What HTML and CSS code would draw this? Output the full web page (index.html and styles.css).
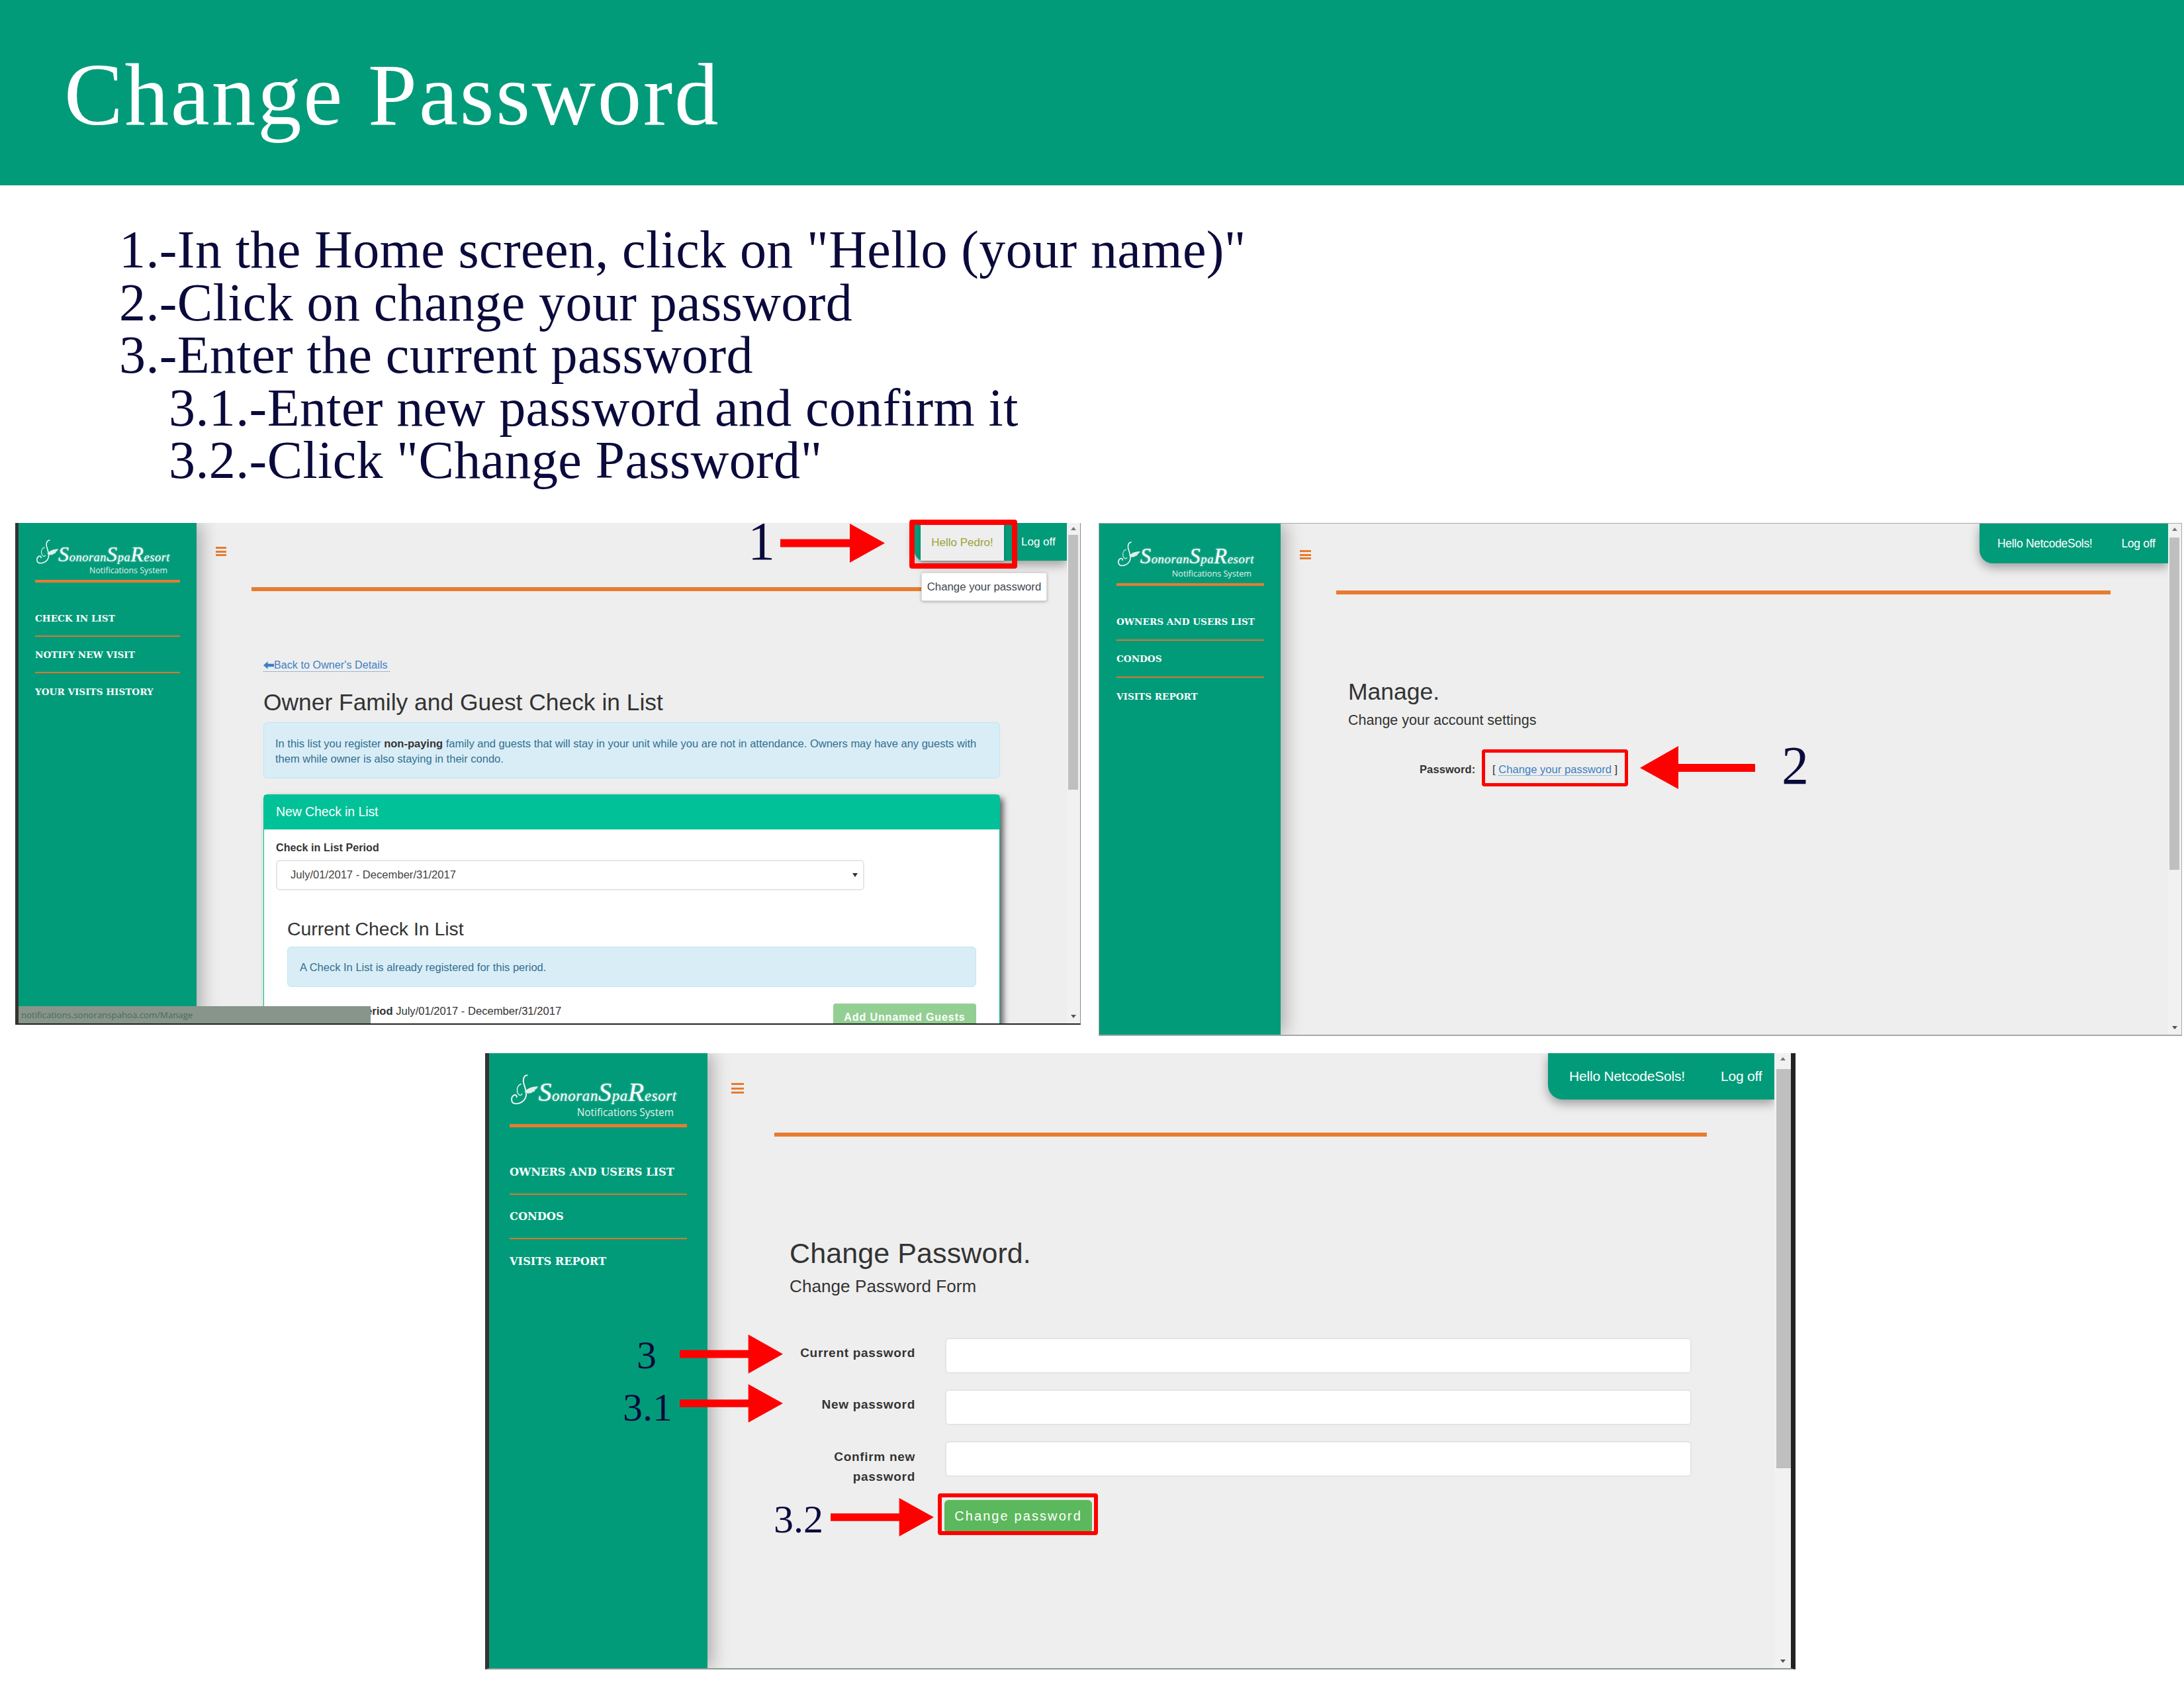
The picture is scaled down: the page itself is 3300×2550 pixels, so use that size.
FILE: index.html
```html
<!DOCTYPE html>
<html lang="en">
<head>
<meta charset="utf-8">
<title>Change Password</title>
<link rel="stylesheet" href="styles.css">
</head>
<body>
<svg class="defs" width="0" height="0" aria-hidden="true">
  <symbol id="flourish" viewBox="0 0 34 38">
    <path d="M21 1C16 1 15 6 16 11C18 18 21 24 18 30C15 36 7 38 3 36C0 34 0 28 4 26C6 25 8 27 7 29" fill="none" stroke="#f2f8f6" stroke-width="1.600"/>
    <path d="M13 12C9 13 7 17 8 22C9 26 13 28 14 24" fill="none" stroke="#f2f8f6" stroke-width="1.100"/>
    <path d="M17 22C21 17 27 15 34 15C33 18 31 19 30 19C31 21 29 22 27 22C26 24 21 25 17 22Z" fill="#dfeee9"/>
  </symbol>
  <symbol id="arrow-right" viewBox="0 0 158 60" preserveAspectRatio="none">
    <polygon points="0,24 105,24 105,0 158,30 105,60 105,36 0,36" fill="#fe0000"/>
  </symbol>
  <symbol id="arrow-left" viewBox="0 0 174 65" preserveAspectRatio="none">
    <polygon points="174,27 58,27 58,0 0,33 58,65 58,39 174,39" fill="#fe0000"/>
  </symbol>
</svg>

<header class="banner"><h1>Change Password</h1></header>

<ol class="steps">
  <li>1.-In the Home screen, click on "Hello (your name)"</li>
  <li>2.-Click on change your password</li>
  <li>3.-Enter the current password</li>
  <li class="sub-step">3.1.-Enter new password and confirm it</li>
  <li class="sub-step">3.2.-Click "Change Password"</li>
</ol>

<main class="canvas">

  <!-- Window 1 -->
  <section class="win win-a">
    <aside class="side">
      <div class="logo">
        <svg class="flourish"><use href="#flourish"/></svg>
        <div class="logo-text">
          <div class="logo-name"><b>S</b>onoran<b>S</b>pa<b>R</b>esort</div>
          <div class="logo-sub">Notifications System</div>
        </div>
      </div>
      <nav class="nav">
        <a>CHECK IN LIST</a>
        <a>NOTIFY NEW VISIT</a>
        <a>YOUR VISITS HISTORY</a>
      </nav>
    </aside>
    <div class="main">
      <div class="burger"></div>
      <div class="rule"></div>
      <div class="content">
        <a class="back"><svg class="back-icon" viewBox="0 0 17 12"><polygon points="0,6 7,0 7,3.500 17,3.500 17,8.500 7,8.500 7,12" fill="#3d7fc4"/></svg>Back to Owner's Details</a>
        <h2 class="title-a">Owner Family and Guest Check in List</h2>
        <div class="alert alert-a">In this list you register <b>non-paying</b> family and guests that will stay in your unit while you are not in attendance. Owners may have any guests with them while owner is also staying in their condo.</div>
        <div class="panel">
          <div class="panel-head">New Check in List</div>
          <div class="panel-body">
            <div class="field-label">Check in List Period</div>
            <div class="select">July/01/2017 - December/31/2017<span class="caret"></span></div>
            <div class="inner">
              <h3 class="title-b">Current Check In List</h3>
              <div class="alert alert-b">A Check In List is already registered for this period.</div>
              <div class="period-row">
                <span class="period"><b>Check in List Period</b> July/01/2017 - December/31/2017</span>
                <span class="add-btn">Add Unnamed Guests</span>
              </div>
            </div>
          </div>
        </div>
      </div>
      <div class="topnav">
        <span class="hello">Hello Pedro!</span>
        <span class="logoff">Log off</span>
      </div>
      <div class="dropdown">Change your password</div>
    </div>
    <div class="scroll"><i class="up"></i><i class="thumb"></i><i class="down"></i></div>
    <div class="status">notifications.sonoranspahoa.com/Manage</div>
  </section>

  <!-- Window 2 -->
  <section class="win win-b">
    <aside class="side">
      <div class="logo">
        <svg class="flourish"><use href="#flourish"/></svg>
        <div class="logo-text">
          <div class="logo-name"><b>S</b>onoran<b>S</b>pa<b>R</b>esort</div>
          <div class="logo-sub">Notifications System</div>
        </div>
      </div>
      <nav class="nav">
        <a>OWNERS AND USERS LIST</a>
        <a>CONDOS</a>
        <a>VISITS REPORT</a>
      </nav>
    </aside>
    <div class="main">
      <div class="burger"></div>
      <div class="rule"></div>
      <div class="content">
        <h2 class="page-title">Manage.</h2>
        <p class="page-sub">Change your account settings</p>
        <div class="pw-row">
          <b class="pw-label">Password:</b>
          <span class="pw-link">[ <a>Change your password</a> ]</span>
        </div>
      </div>
      <div class="topnav">
        <span class="hello">Hello NetcodeSols!</span>
        <span class="logoff">Log off</span>
      </div>
    </div>
    <div class="scroll"><i class="up"></i><i class="thumb"></i><i class="down"></i></div>
  </section>

  <!-- Window 3 -->
  <section class="win win-c">
    <aside class="side">
      <div class="logo">
        <svg class="flourish"><use href="#flourish"/></svg>
        <div class="logo-text">
          <div class="logo-name"><b>S</b>onoran<b>S</b>pa<b>R</b>esort</div>
          <div class="logo-sub">Notifications System</div>
        </div>
      </div>
      <nav class="nav">
        <a>OWNERS AND USERS LIST</a>
        <a>CONDOS</a>
        <a>VISITS REPORT</a>
      </nav>
    </aside>
    <div class="main">
      <div class="burger"></div>
      <div class="rule"></div>
      <div class="content">
        <h2 class="page-title">Change Password.</h2>
        <p class="page-sub">Change Password Form</p>
        <form class="form">
          <div class="form-row"><label class="form-label">Current password</label><div class="input"></div></div>
          <div class="form-row"><label class="form-label">New password</label><div class="input"></div></div>
          <div class="form-row"><label class="form-label">Confirm new password</label><div class="input"></div></div>
          <div class="form-row"><span class="form-label"></span><span class="submit">Change password</span></div>
        </form>
      </div>
      <div class="topnav">
        <span class="hello">Hello NetcodeSols!</span>
        <span class="logoff">Log off</span>
      </div>
    </div>
    <div class="scroll"><i class="up"></i><i class="thumb"></i><i class="down"></i></div>
  </section>

  <!-- Annotations over the screenshots -->
  <div class="mark mark-1"></div>
  <div class="mark mark-2"></div>
  <div class="mark mark-3"></div>

  <span class="num num-1">1</span>
  <span class="num num-2">2</span>
  <span class="num num-3">3</span>
  <span class="num num-31">3.1</span>
  <span class="num num-32">3.2</span>

  <svg class="arrow arrow-1"><use href="#arrow-right"/></svg>
  <svg class="arrow arrow-2"><use href="#arrow-left"/></svg>
  <svg class="arrow arrow-3"><use href="#arrow-right"/></svg>
  <svg class="arrow arrow-31"><use href="#arrow-right"/></svg>
  <svg class="arrow arrow-32"><use href="#arrow-right"/></svg>
</main>
</body>
</html>
```
FILE: styles.css
```css
* { box-sizing: border-box; }
html, body { margin: 0; padding: 0; background: #fff; }
body {
  width: 3300px;
  height: 2550px;
  overflow: hidden;
  font-family: "Liberation Sans", Arial, sans-serif;
  color: #333;
}
.defs { position: absolute; }

/* Banner and steps */
.banner {
  height: 280px;
  background: #029b7a;
  padding: 68px 0 0 97px;
}
.banner h1 {
  margin: 0;
  font: 400 133px/150px "Liberation Serif", serif;
  letter-spacing: 2.800px;
  color: #fff;
}
.steps {
  list-style: none;
  margin: 0;
  padding: 58px 0 0 180px;
  height: 500px;
  font: 400 80px/79.500px "Liberation Serif", serif;
  letter-spacing: .400px;
  color: #0b0a3c;
}
.steps li { white-space: nowrap; }
.sub-step { padding-left: 75px; }

/* Canvas of screenshots */
.canvas { position: relative; width: 3300px; height: 1770px; }
.win {
  position: absolute;
  display: flex;
  overflow: hidden;
  background: #eee;
}
.win-a { left: 23px; top: 10px; width: 1610px; height: 758px; border-left: 5px solid #333; border-bottom: 2px solid #222; border-right: 1px solid #7f9488; }
.win-b { left: 1660px; top: 10px; width: 1637px; height: 775px; border: 1px solid #a8a8a8; border-bottom-width: 2px; }
.win-c { left: 733px; top: 811px; width: 1980px; height: 931px; border-left: 6px solid #333; border-right: 7px solid #222; border-bottom: 2px solid #8a9a90; }

/* Sidebar */
.side {
  flex: none;
  position: relative;
  z-index: 1;
  background: #029b7a;
  box-shadow: 6px 0 26px rgba(0, 0, 0, .3);
}
.win-a .side { width: 269px; padding: 25px 25px 0; }
.win-b .side { width: 274px; padding: 27px 25px 0 26px; }
.win-c .side { width: 330px; padding: 32px 31px 0; }

.logo {
  display: flex;
  align-items: flex-start;
  padding-left: .200em;
  border-bottom: 4px solid #e87b30;
  color: #fff;
}
.win-a .logo { font-size: 10px; height: 65px; }
.win-b .logo { font-size: 10.200px; height: 67px; }
.win-c .logo { font-size: 12.400px; height: 80px; border-bottom-width: 5px; }
.flourish { flex: none; width: 3.300em; height: 3.700em; }
.logo-text { flex: none; width: 16.500em; padding-top: 1.400em; }
.logo-name {
  font: italic 400 1.840em/1.200em "Liberation Serif", serif;
  white-space: nowrap;
  text-shadow: 0 0 3px rgba(255, 255, 255, .6);
  letter-spacing: .030em;
}
.logo-name b { font-size: 1.750em; font-weight: 400; line-height: .500em; }
.logo-sub {
  font: 400 1.240em/1.200em "Open Sans", sans-serif;
  text-align: right;
  color: #e3f1ec;
  margin-top: .160em;
  white-space: nowrap;
}

.nav a {
  display: flex;
  align-items: center;
  color: #fff;
  font-family: "DejaVu Serif", serif;
  font-weight: 700;
  white-space: nowrap;
  border-bottom: 2px solid #d8772f;
}
.nav a:last-child { border-bottom: 0; }
.win-a .nav { margin-top: 27px; }
.win-a .nav a { height: 55px; font-size: 13.600px; }
.win-b .nav { margin-top: 27px; }
.win-b .nav a { height: 56px; font-size: 13.600px; }
.win-c .nav { margin-top: 35px; }
.win-c .nav a { height: 67px; font-size: 16.200px; }

/* Main */
.main { position: relative; flex: 1; min-width: 0; overflow: hidden; background: #eee; }
.burger {
  height: 14px;
  border-top: 3px solid #e87b30;
  border-bottom: 3px solid #e87b30;
  background: linear-gradient(#e87b30, #e87b30) center / 100% 3px no-repeat;
}
.rule { height: 6px; background: #e87b30; }

.win-a .burger { width: 16px; margin: 36px 0 0 29px; }
.win-a .rule { width: 1100px; margin: 47px 0 0 83px; }
.win-a .content { margin: 0 0 0 101px; width: 1113px; }

.win-b .burger { width: 17px; margin: 40px 0 0 29px; }
.win-b .rule { width: 1170px; margin: 47px 0 0 84px; }
.win-b .content { margin-left: 102px; }

.win-c .burger { width: 19px; height: 16px; margin: 45px 0 0 36px; }
.win-c .rule { width: 1409px; margin: 59px 0 0 101px; }
.win-c .content { margin-left: 124px; }

/* Window 1 content */
.back {
  display: flex;
  align-items: center;
  width: 191px;
  height: 20px;
  margin-top: 102px;
  font-size: 16px;
  letter-spacing: .100px;
  color: #3d7fc4;
  border-bottom: 1px dotted #3d7fc4;
  white-space: nowrap;
}
.back-icon { width: 16px; height: 12px; flex: none; }
h2 { margin: 0; font-weight: 400; }
.title-a { margin-top: 26px; font-size: 35.400px; line-height: 40px; color: #333; }
.alert {
  background: #d9edf7;
  border: 1px solid #bce8f1;
  border-radius: 6px;
  color: #31708f;
  font-size: 16.500px;
  line-height: 23px;
}
.alert b { color: #333; }
.alert-a { height: 85px; margin-top: 10px; padding: 20px 17px; }
.alert-b { height: 61px; margin-top: 9px; padding: 19px 18px; width: 1041px; }
.panel {
  margin-top: 24px;
  background: #fff;
  border-radius: 6px 6px 0 0;
  border: 1px solid #00c197;
  border-bottom: 0;
  box-shadow: 5px 5px 10px rgba(0, 0, 0, .6);
  height: 400px;
}
.panel-head {
  height: 52px;
  background: #00c197;
  color: #fff;
  font-size: 19.500px;
  line-height: 50px;
  padding-left: 18px;
  letter-spacing: -.100px;
}
.panel-body { padding: 18px 18px 0; }
.field-label { font-size: 16px; line-height: 20px; font-weight: 700; letter-spacing: .100px; color: #333; }
.select {
  position: relative;
  width: 889px;
  height: 46px;
  margin-top: 8px;
  background: #fff;
  border: 2px solid #e6e6e6;
  border-radius: 6px;
  padding-left: 20px;
  font-size: 16.600px;
  line-height: 42px;
  color: #444;
}
.caret {
  position: absolute;
  right: 8px;
  top: 18px;
  border: 4px solid transparent;
  border-top: 6px solid #333;
  border-bottom: 0;
}
.inner { padding-left: 17px; }
.title-b { margin: 40px 0 0; font-size: 28.400px; line-height: 36px; font-weight: 400; color: #333; }
.period-row { display: flex; justify-content: space-between; width: 1041px; margin-top: 25px; }
.period { font-size: 16.600px; line-height: 24px; }
.add-btn {
  width: 216px;
  height: 46px;
  background: #93cf93;
  border-radius: 4px;
  color: #fff;
  font-size: 16px;
  font-weight: 700;
  letter-spacing: .900px;
  line-height: 42px;
  text-align: center;
}

/* Top nav */
.topnav {
  position: absolute;
  top: 0;
  right: 0;
  display: flex;
  align-items: center;
  background: #029b7a;
  color: #fff;
  white-space: nowrap;
  box-shadow: 0 6px 16px rgba(0, 0, 0, .35);
}
.win-a .topnav { width: 230px; height: 57px; padding-left: 9px; font-size: 17px; border-radius: 0 0 0 14px; }
.win-a .hello { width: 126px; height: 54px; background: #eee; color: #9aa33c; text-align: center; line-height: 54px; box-shadow: 0 1px 4px rgba(0,0,0,.3); align-self: flex-end; }
.win-a .logoff { margin-left: 26px; }
.win-b .topnav { width: 285px; height: 60px; padding-left: 27px; font-size: 17.500px; letter-spacing: -.300px; border-radius: 0 0 0 20px; }
.win-b .logoff { margin-left: 44px; }
.win-c .topnav { width: 342px; height: 70px; padding-left: 32px; font-size: 21px; letter-spacing: -.200px; border-radius: 0 0 0 22px; }
.win-c .logoff { margin-left: 54px; }
.dropdown {
  position: absolute;
  left: 1095px;
  top: 75px;
  width: 190px;
  height: 43px;
  background: #fff;
  border: 1px solid #ddd;
  box-shadow: 0 1px 4px rgba(0, 0, 0, .3);
  border-radius: 3px;
  font-size: 16.800px;
  line-height: 41px;
  text-align: center;
  white-space: nowrap;
  color: #3f4650;
}

/* Window 2/3 content */
.win-b .page-title { margin-top: 127px; font-size: 35.500px; line-height: 40px; }
.page-sub { margin: 0; color: #333; }
.win-b .page-sub { margin-top: 10px; font-size: 21.500px; line-height: 26px; }
.pw-row { display: flex; align-items: center; height: 30px; margin-top: 46px; }
.pw-label { width: 192px; padding-left: 108px; font-size: 16.500px; letter-spacing: .100px; white-space: nowrap; }
.pw-link { font-size: 16.500px; margin-left: 26px; color: #333; white-space: nowrap; letter-spacing: .050px; }
.pw-link a { color: #3d7fc4; border-bottom: 1px dotted #3d7fc4; }

.win-c .page-title { margin-top: 151px; font-size: 43px; line-height: 50px; letter-spacing: .100px; }
.win-c .page-sub { margin-top: 10px; font-size: 26px; line-height: 30px; letter-spacing: .100px; }
.form { margin-top: 63px; }
.form-row { display: flex; height: 54px; }
.form-row + .form-row { margin-top: 24px; }
.form-row:last-child { margin-top: 35px; height: 50px; }
.form-label {
  flex: none;
  width: 190px;
  text-align: right;
  font-weight: 700;
  font-size: 19px;
  letter-spacing: .700px;
  line-height: 30px;
  padding-top: 8px;
  color: #333;
}
.form-row:nth-child(3) .form-label { padding-top: 9px; }
.input {
  width: 1128px;
  height: 54px;
  margin-left: 45px;
  background: #fff;
  border: 2px solid #e4e4e4;
  border-radius: 6px;
}
.submit {
  width: 223px;
  height: 50px;
  margin-left: 44px;
  background: #5cb85c;
  border-radius: 6px;
  color: #fff;
  font-size: 20px;
  letter-spacing: 2.100px;
  line-height: 48px;
  text-align: center;
}

/* Scrollbar */
.scroll { position: relative; flex: none; background: #f1f1f1; }
.win-a .scroll { width: 20px; }
.win-b .scroll { width: 20px; }
.win-c .scroll { width: 25px; }
.thumb { position: absolute; background: #bfbfbf; }
.win-a .thumb { left: 2px; right: 3px; top: 18px; height: 385px; }
.win-b .thumb { left: 2px; right: 3px; top: 21px; height: 502px; }
.win-c .thumb { left: 3px; right: 0; top: 24px; height: 603px; }
.up, .down {
  position: absolute;
  left: 50%;
  margin-left: -4px;
  border: 4px solid transparent;
  border-top-width: 0;
  border-bottom: 5px solid #777;
}
.up { top: 6px; }
.down { bottom: 8px; border-bottom-width: 0; border-top: 5px solid #555; }

/* Status bar */
.status {
  position: absolute;
  left: 0;
  bottom: 0;
  z-index: 2;
  width: 532px;
  height: 26px;
  padding-left: 4px;
  background: #87958a;
  color: #4e6a60;
  font: 400 13.200px/26px "Open Sans", sans-serif;
}

/* Annotations */
.mark, .num, .arrow { position: absolute; z-index: 5; }
.mark { border: 8px solid #fe0000; border-radius: 4px; }
.mark-1 { left: 1374px; top: 5px; width: 163px; height: 74px; }
.mark-2 { left: 2239px; top: 352px; width: 221px; height: 56px; border-width: 5px; }
.mark-3 { left: 1417px; top: 1476px; width: 242px; height: 63px; border-width: 6px; }

.num { font: 400 82px/82px "Liberation Serif", serif; color: #0b0a3c; white-space: nowrap; }
.num-1 { left: 1130px; top: -3px; }
.num-2 { left: 2692px; top: 336px; }
.num-3 { left: 962px; top: 1236px; font-size: 60px; line-height: 62px; }
.num-31 { left: 941px; top: 1315px; font-size: 60px; line-height: 62px; }
.num-32 { left: 1169px; top: 1484px; font-size: 60px; line-height: 62px; }

.arrow-1 { left: 1179px; top: 11px; width: 158px; height: 59px; }
.arrow-2 { left: 2478px; top: 347px; width: 174px; height: 65px; }
.arrow-3 { left: 1027px; top: 1236px; width: 156px; height: 59px; }
.arrow-31 { left: 1027px; top: 1311px; width: 156px; height: 58px; }
.arrow-32 { left: 1255px; top: 1483px; width: 156px; height: 58px; }
```
